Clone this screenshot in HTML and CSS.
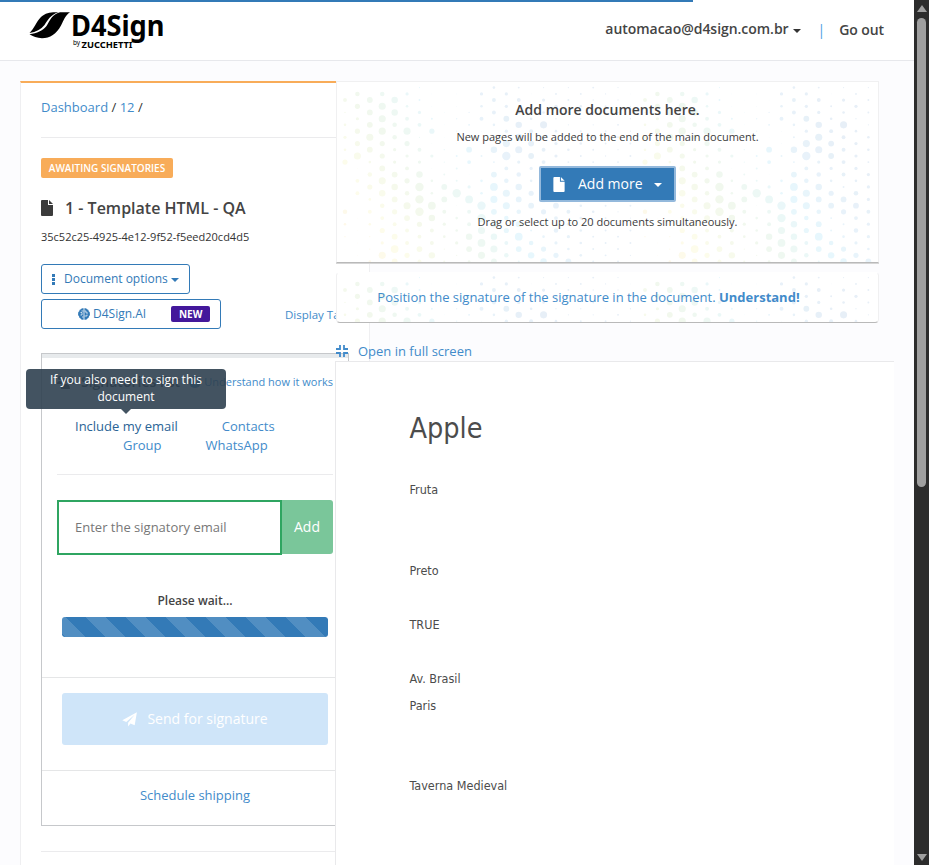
FILE: index.html
```html
<!DOCTYPE html>
<html lang="en">
<head>
<meta charset="utf-8">
<title>D4Sign</title>
<link rel="stylesheet" href="styles.css">
</head>
<body>
<svg class="defs" width="0" height="0" aria-hidden="true">
  <defs><pattern id="dots" width="300" height="300" patternUnits="userSpaceOnUse"></pattern></defs>
</svg>
<div class="page">
  <header class="topbar">
    <div class="loading"></div>
    <svg class="logo" width="136" height="40" viewBox="28 10 136 40">
      <path d="M29.500 33C34 29 36 22 41 17C46 12.500 51 12 58.500 12.300C50 15 48 20 44.500 25C41 29.500 36 32 29.500 33Z"/>
      <path d="M29.500 34.300C37 33 42.500 31 46.500 26C50 20.500 52 14.500 60 12.300L70 12.200C65 15.500 64 20 61 25.500C56.500 34 50 38.200 42 38.200C37 38.200 33 36.500 29.500 34.300Z"/>
      <text class="logo-name" x="71" y="36" textLength="93.500" lengthAdjust="spacingAndGlyphs">D4Sign</text>
      <text class="logo-by" x="73" y="45">by</text>
      <text class="logo-sub" x="81.500" y="48" textLength="51" lengthAdjust="spacingAndGlyphs">ZUCCHETTI</text>
    </svg>
    <nav class="user">
      <a class="mail">automacao@d4sign.com.br</a><i class="caret"></i>
      <span class="sep">|</span>
      <a class="out">Go out</a>
    </nav>
  </header>

  <main class="content">
    <section class="sidebar">
      <div class="crumbs"><a>Dashboard</a> / <a>12</a> /</div>
      <div class="status"><span>AWAITING SIGNATORIES</span></div>
      <h1>
        <svg width="12" height="16" viewBox="0 0 12 16"><path d="M1 0H7V5H12V15Q12 16 11 16H1Q0 16 0 15V1Q0 0 1 0ZM8 0L12 4H8Z"/></svg>
        <span>1 - Template HTML - QA</span>
      </h1>
      <div class="uuid">35c52c25-4925-4e12-9f52-f5eed20cd4d5</div>
      <a class="btn options">
        <svg width="3" height="11" viewBox="0 0 3 11"><path d="M0 0H3V3H0ZM0 4H3V7H0ZM0 8H3V11H0Z"/></svg>
        <span>Document options</span><i class="caret"></i>
      </a>
      <div class="ai-row">
        <a class="btn ai">
          <svg width="12" height="12" viewBox="0 0 12 12"><path d="M5.600 .3Q3.500-.2 3 1.300Q1.200 1.500 1.300 3.200Q-.2 4 .2 5.600Q-.3 7.500 1 8.300Q1 10 2.600 10.400Q3.300 12.200 5.600 11.700ZM6.400 .3Q8.500-.2 9 1.300Q10.800 1.500 10.700 3.200Q12.200 4 11.800 5.600Q12.300 7.500 11 8.300Q11 10 9.400 10.400Q8.700 12.200 6.400 11.700Z"/><path class="cut" d="M2.500 4.500H4V7H2.500M4 9H5.500M6.500 3H8V5H10M6.500 8H9V6.500M3.500 3H5.500"/></svg>
          <span>D4Sign.AI</span><b>NEW</b>
        </a>
        <a class="tags">Display Tags</a>
      </div>

      <div class="signers">
        <div class="signers-head">
          <svg width="17" height="14" viewBox="0 0 17 14"><circle cx="3" cy="3" r="2"/><circle cx="14" cy="3" r="2"/><circle cx="8.500" cy="5" r="2.500"/><path d="M0 9Q0 6 3 6Q5 6 5 8L4 9ZM17 9Q17 6 14 6Q12 6 12 8L13 9ZM4 14Q4 9 8.500 9Q13 9 13 14Z"/></svg>
          <strong>Signatories list</strong>
          <i class="help">?</i>
          <a>Understand how it works</a>
        </div>
        <div class="links first">
          <a class="hover">Include my email<span class="tooltip">If you also need to sign this document</span></a><a class="contacts">Contacts</a>
        </div>
        <div class="links second"><a>Group</a><a class="whats">WhatsApp</a></div>
        <div class="add-row">
          <input type="text" placeholder="Enter the signatory email">
          <button type="button">Add</button>
        </div>
        <div class="wait">Please wait...</div>
        <div class="progress"></div>
        <div class="send-box">
          <div class="send">
            <svg width="15" height="15" viewBox="0 0 16 16"><path d="M15.900 .2L13.500 14.200L9 12.300L6.500 15.500V11.500L13.500 3L4.500 10.600L.3 8.800Z"/></svg>
            <span>Send for signature</span>
          </div>
        </div>
        <div class="schedule"><a>Schedule shipping</a></div>
      </div>
      <div class="rule"></div>
    </section>

    <section class="main">
      <div class="card upload">
        <svg class="dots"><rect width="100%" height="100%" fill="url(#dots)"/></svg>
        <h2>Add more documents here.</h2>
        <p>New pages will be added to the end of the main document.</p>
        <a class="more">
          <svg width="12" height="15" viewBox="0 0 12 16"><path d="M1 0H7V5H12V15Q12 16 11 16H1Q0 16 0 15V1Q0 0 1 0ZM8 0L12 4H8Z"/></svg>
          <span>Add more</span><i class="caret"></i>
        </a>
        <p class="drag">Drag or select up to 20 documents simultaneously.</p>
      </div>
      <div class="card position">
        <svg class="dots"><rect width="100%" height="100%" fill="url(#dots)"/></svg>
        <a>Position the signature of the signature in the document. <b>Understand!</b></a>
      </div>
      <a class="full">
        <svg width="12" height="12" viewBox="0 0 12 12"><path d="M4 0V4H0M8 0V4H12M4 12V8H0M8 12V8H12"/></svg>
        <span>Open in full screen</span>
      </a>
      <article class="doc">
        <h3>Apple</h3>
        <p class="l1">Fruta</p>
        <p class="l2">Preto</p>
        <p class="l3">TRUE</p>
        <p class="l4">Av. Brasil</p>
        <p class="l5">Paris</p>
        <p class="l6">Taverna Medieval</p>
      </article>
    </section>
  </main>
</div>
<aside class="scroll"><i class="up"></i><div class="thumb"></div><i class="down"></i></aside>
<script src="dots.js"></script>
</body>
</html>
```
FILE: dots.js
```js
// One string per column; each hex digit is a dot radius in thirds of a pixel.
const columns = [
  "062454801074211", "78588b16601111", "0999b9478464224", "7bbb889ba7685b",
  "0aa77559a9869c9", "546b85687b9668", "2356265addd8696", "113815144ca66a",
  "011112239965423", "11221333d14452", "012319615c66a94", "546113044ddbcb",
  "46643a39cb9aab9", "5595bd67bb7867", "365abb57a979c93", "1346995489337a",
  "254b6666398348a", "35245554796758", "233244355565549", "34234333444444",
  "323243334443333", "23133243433333", "222332333323333", "12223323332332"
];
// Colour ramp along the diagonal, from orange at the lower left to blue.
const stops = [
  [-330, 254, 246, 232], [-150, 253, 252, 235], [30, 241, 248, 237], [140, 237, 248, 245],
  [230, 231, 247, 253], [340, 232, 243, 250], [520, 231, 239, 247]
];
function colour(t) {
  let i = 0;
  while (i < stops.length - 2 && t > stops[i + 1][0]) i++;
  const a = stops[i], b = stops[i + 1];
  const f = Math.max(0, Math.min(1, (t - a[0]) / (b[0] - a[0])));
  return "rgb(" + [1, 2, 3].map(n => Math.round(a[n] + (b[n] - a[n]) * f)).join(",") + ")";
}
const pattern = document.getElementById("dots");
columns.forEach((col, i) => {
  [...col].forEach((digit, k) => {
    const x = 9 + 12.41 * i;
    const y = (i % 2 ? 11.9 : 5.6) + 12.42 * k;
    const c = document.createElementNS("http://www.w3.org/2000/svg", "circle");
    c.setAttribute("cx", x);
    c.setAttribute("cy", y);
    c.setAttribute("r", parseInt(digit, 16) / 3.1);
    c.setAttribute("fill", colour(3 * x - 2 * y));
    pattern.appendChild(c);
  });
});
```
FILE: styles.css
```css
* { box-sizing: border-box; }
body {
  margin: 0;
  display: flex;
  height: 865px;
  overflow: hidden;
  background: #fcfcfe;
  font: 13px/20px "Open Sans", sans-serif;
  color: #333;
}
.defs { position: absolute; }
h1, h2, h3, p { margin: 0; }
svg { display: block; flex: none; }
a { color: #428bca; white-space: nowrap; }
.page { width: 914px; height: 865px; overflow: hidden; }

.caret {
  display: inline-block;
  border: 4px solid transparent;
  border-top-color: currentColor;
  border-bottom: 0;
}

.topbar {
  position: relative;
  display: flex;
  justify-content: space-between;
  height: 61px;
  padding: 10px 30px 0 28px;
  background: #fff;
  border-bottom: 1px solid #e7e8ec;
}
.loading { position: absolute; left: 0; top: 0; width: 693px; height: 2px; background: #337ab7; }
.logo { fill: #000; overflow: visible; }
.logo-name { font: 700 28px "Noto Sans", sans-serif; }
.logo-by { font: 6.5px "Noto Sans", sans-serif; }
.logo-sub { font: 700 9.5px "Noto Sans", sans-serif; }
.user { display: flex; align-items: center; height: 38px; font-size: 14px; font-weight: 600; }
.user a { color: #444; }
.user .mail { letter-spacing: -.04px; }
.user .caret { margin: 3px 0 0 4px; }
.user .sep { margin: 2px 14px 0 17px; color: #4a9fe4; font-weight: 400; }
.user .out { margin-top: 2px; letter-spacing: -.1px; }

.content { display: flex; align-items: flex-start; padding: 20px 0 0 20px; }
.sidebar {
  flex: none;
  width: 350px;
  height: 800px;
  padding-left: 20px;
  background: #fff;
  border: 1px solid #efeff1;
  border-top: 2px solid #f8ac59;
}
.crumbs { height: 55px; padding-top: 14px; border-bottom: 1px solid #ebebed; }
.status { padding-top: 20px; height: 58px; }
.status span {
  display: block;
  width: 132px;
  height: 20px;
  border-radius: 2px;
  background: #f8ac59;
  color: #fff;
  font-size: 10px;
  font-weight: 600;
  line-height: 21px;
  text-align: center;
}
h1 { display: flex; align-items: center; height: 24px; font-size: 16px; font-weight: 600; color: #444; }
h1 svg { margin-right: 12px; fill: #3b3b3b; }
.uuid { margin-top: 7px; font-size: 11px; }
.btn {
  display: flex;
  align-items: center;
  height: 30px;
  border: 1px solid #337ab7;
  border-radius: 3px;
  color: #337ab7;
}
.btn svg { fill: currentColor; }
.options { width: 149px; margin-top: 17px; padding-left: 10px; font-size: 12px; }
.options span { margin-left: 9px; }
.options .caret { margin: 2px 0 0 3px; }
.ai-row { display: flex; align-items: center; margin-top: 5px; }
.ai { width: 180px; padding-left: 36px; font-size: 12px; }
.ai span { margin-left: 3px; }
.ai .cut { fill: none; stroke: #fff; stroke-width: .7; }
.ai b {
  width: 39px;
  height: 16px;
  margin-left: 25px;
  border-radius: 2px;
  background: #43189b;
  color: #fff;
  font-size: 10px;
  line-height: 16px;
  text-align: center;
}
.tags { margin: 2px 0 0 64px; font-size: 11.5px; }

.signers {
  width: 308px;
  height: 473px;
  margin-top: 24px;
  border: 1px solid #c6c8cb;
  box-shadow: inset 0 4px #e7eaec;
}
.signers-head { display: flex; align-items: center; height: 56px; padding: 0 15px; }
.signers-head svg { fill: #333; }
.signers-head strong { margin-left: 7px; font-size: 14px; font-weight: 600; }
.signers-head .help {
  width: 12px;
  height: 12px;
  margin-left: auto;
  border-radius: 50%;
  background: #428bca;
  color: #fff;
  font: 700 9px/12px "Open Sans", sans-serif;
  text-align: center;
}
.signers-head a { margin-left: 3px; font-size: 11px; }
.links { display: flex; height: 19px; line-height: 20px; }
.links.first { margin-top: 6px; padding-left: 33px; }
.links.second { padding-left: 81px; }
.contacts, .whats { margin-left: 44px; }
.links .hover { position: relative; color: #2a6496; }
.tooltip {
  position: absolute;
  left: -49px;
  top: -47px;
  width: 200px;
  height: 40px;
  padding: 2px 8px;
  border-radius: 4px;
  background: rgba(47, 64, 80, .9);
  color: #fff;
  font-size: 12px;
  font-weight: 500;
  line-height: 17px;
  text-align: center;
  white-space: normal;
}
.tooltip::after {
  content: "";
  position: absolute;
  left: 95px;
  top: 40px;
  border: 5px solid transparent;
  border-top-color: rgba(47, 64, 80, .9);
  border-bottom: 0;
}
.add-row {
  display: flex;
  align-items: flex-start;
  width: 276px;
  margin: 20px 0 0 15px;
  padding-top: 25px;
  border-top: 1px solid #ebebed;
}
.add-row input {
  width: 225px;
  height: 55px;
  padding: 0 16px 2px;
  border: 2px solid #2fa561;
  border-radius: 0;
  background: #fff;
  font: 13px "Open Sans", sans-serif;
}
.add-row input::placeholder { color: #777; }
.add-row button {
  width: 51px;
  height: 54px;
  padding: 0 1px 1px 0;
  border: 0;
  border-radius: 0 3px 3px 0;
  background: #7ac69a;
  color: #fff;
  font: 500 14px "Open Sans", sans-serif;
}
.wait { margin: 36px 0 6px; font-size: 12px; font-weight: 600; color: #444; text-align: center; }
.progress {
  width: 266px;
  height: 20px;
  margin-left: 20px;
  border-radius: 3px;
  background: #337ab7 linear-gradient(45deg, rgba(255,255,255,.15) 25%, transparent 25%, transparent 50%, rgba(255,255,255,.15) 50%, rgba(255,255,255,.15) 75%, transparent 75%) 24px 0 / 40px 40px;
}
.send-box { height: 94px; margin-top: 40px; padding: 15px 20px; border: solid #e5e6e7; border-width: 1px 0; }
.send {
  display: flex;
  align-items: center;
  justify-content: center;
  height: 52px;
  border-radius: 3px;
  background: #cfe5f9;
  color: #fff;
  font-size: 14px;
}
.send svg { margin-right: 10px; fill: #fff; }
.schedule { padding-top: 14px; text-align: center; }
.rule { margin-top: 25px; border-top: 1px solid #ebebed; }

.main { position: relative; flex: none; width: 559px; margin-left: -35px; }
.card {
  position: relative;
  width: 543px;
  margin-left: 1px;
  background: #fff;
  border: 1px solid #f0f0f1;
  border-bottom: 1px solid #b9b9b9;
  text-align: center;
}
.dots { position: absolute; left: -1px; top: 0; width: 542px; height: 100%; }
.card > :not(.dots) { position: relative; }
.upload { height: 182px; padding-top: 18px; box-shadow: 0 1px #d6d6d6; }
.upload h2 { font-size: 14px; font-weight: 600; color: #444; }
.upload p { margin-top: 7px; font-size: 11px; color: #3c3c3c; }
.upload .more {
  display: flex;
  align-items: center;
  width: 137px;
  height: 36px;
  margin: 19px auto 0;
  padding-left: 12px;
  border: 2px solid #94b9dc;
  border-radius: 2px;
  background: #337ab7;
  color: #fff;
  font-size: 14px;
}
.more svg { fill: #fff; }
.more span { margin-left: 13px; font-weight: 500; }
.more .caret { margin: 2px 0 0 11px; }
.upload .drag { margin-top: 10px; }
.position { height: 51px; margin-top: 9px; padding-top: 14px; border-top-color: #fff; border-radius: 4px; overflow: hidden; }
.position .dots { top: -1px; height: 52px; }
.position a { margin-left: -38px; }
.full { display: flex; align-items: center; height: 38px; padding: 18px 0 0 1px; }
.full svg { margin-right: 10px; fill: none; stroke: #428bca; stroke-width: 1.8; }
.doc {
  height: 520px;
  padding: 51px 0 0 73.5px;
  background: #fff;
  border: 1px solid #e9e9eb;
  border-right: 0;
  font-family: "DejaVu Sans Condensed", "DejaVu Sans", sans-serif;
  font-stretch: condensed;
  color: #4c4c4c;
}
.doc h3 { height: 32px; font-size: 28.5px; font-weight: 400; line-height: 32px; }
.doc p { height: 20px; font-size: 12.5px; line-height: 20px; }
.doc .l1 { margin-top: 35px; }
.doc .l2 { margin-top: 61px; }
.doc .l3 { margin-top: 34px; }
.doc .l4 { margin-top: 34px; }
.doc .l5 { margin-top: 7px; }
.doc .l6 { margin-top: 60px; }

.scroll {
  display: flex;
  flex-direction: column;
  align-items: center;
  width: 15px;
  height: 865px;
  padding: 5px 0 4px;
  background: #2c2c2c;
}
.scroll i { border: 5px solid transparent; }
.scroll .up { border-top: 0; border-bottom: 7px solid #9f9f9f; }
.scroll .down { margin-top: auto; border-bottom: 0; border-top: 7px solid #9f9f9f; }
.thumb { width: 9px; height: 469px; margin-top: 6px; border-radius: 5px; background: #9f9f9f; }
```
